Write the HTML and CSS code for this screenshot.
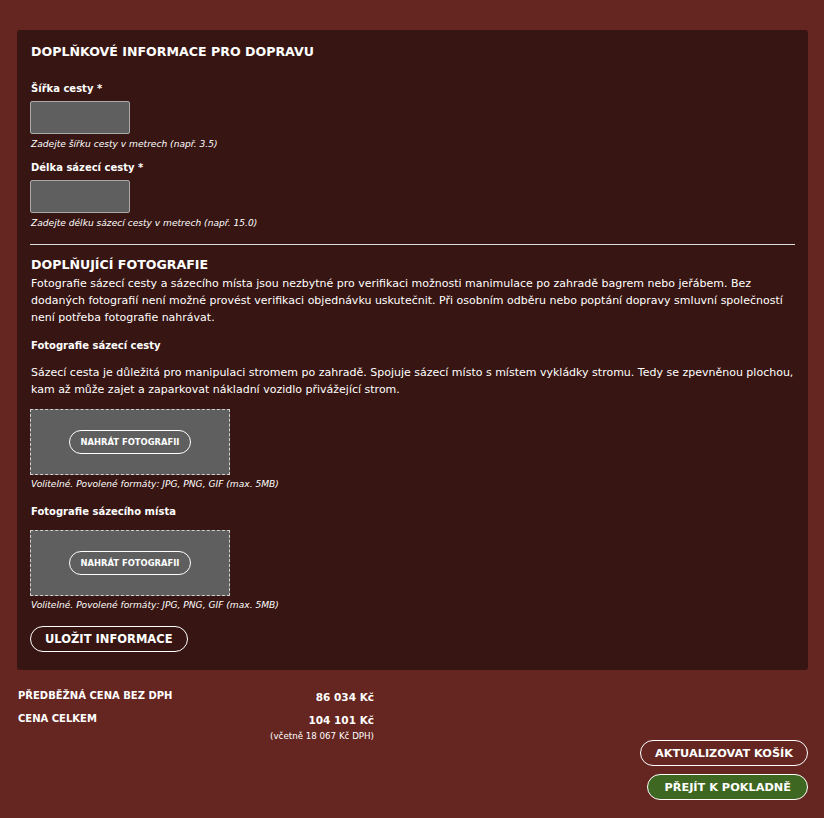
FILE: index.html
```html
<!DOCTYPE html>
<html lang="cs">
<head>
  <meta charset="UTF-8">
  <meta name="viewport" content="width=device-width, initial-scale=1.0">
  <link rel="stylesheet" href="styles.css">
</head>
<body>
  <div class="page">

    <div class="panel">
      <h2 class="panel-title">Doplňkové informace pro dopravu</h2>

      <div class="field">
        <label class="field-label" for="sirka">Šířka cesty *</label>
        <input class="field-input" id="sirka" type="text">
        <div class="hint">Zadejte šířku cesty v metrech (např. 3.5)</div>
      </div>

      <div class="field">
        <label class="field-label" for="delka">Délka sázecí cesty *</label>
        <input class="field-input" id="delka" type="text">
        <div class="hint">Zadejte délku sázecí cesty v metrech (např. 15.0)</div>
      </div>

      <hr class="divider">

      <h2 class="panel-title panel-title--tight">Doplňující fotografie</h2>
      <p class="text">Fotografie sázecí cesty a sázecího místa jsou nezbytné pro verifikaci možnosti manimulace po zahradě bagrem nebo jeřábem. Bez dodaných fotografií není možné provést verifikaci objednávku uskutečnit. Při osobním odběru nebo poptání dopravy smluvní společností není potřeba fotografie nahrávat.</p>

      <div class="photo">
        <div class="photo-title">Fotografie sázecí cesty</div>
        <p class="text">Sázecí cesta je důležitá pro manipulaci stromem po zahradě. Spojuje sázecí místo s místem vykládky stromu. Tedy se zpevněnou plochou, kam až může zajet a zaparkovat nákladní vozidlo přivážející strom.</p>
        <div class="dropzone">
          <button class="btn-small" type="button">Nahrát fotografii</button>
        </div>
        <div class="hint">Volitelné. Povolené formáty: JPG, PNG, GIF (max. 5MB)</div>
      </div>

      <div class="photo">
        <div class="photo-title">Fotografie sázecího místa</div>
        <div class="dropzone">
          <button class="btn-small" type="button">Nahrát fotografii</button>
        </div>
        <div class="hint">Volitelné. Povolené formáty: JPG, PNG, GIF (max. 5MB)</div>
      </div>

      <button class="btn-outline" type="button">Uložit informace</button>
    </div>

    <div class="totals">
      <div class="totals-label">Předběžná cena bez DPH</div>
      <div class="totals-value">86 034 Kč</div>
      <div class="totals-label">Cena celkem</div>
      <div class="totals-value">104 101 Kč<span class="totals-vat">(včetně 18 067 Kč DPH)</span></div>
    </div>

    <div class="actions">
      <button class="btn-outline btn-big" type="button">Aktualizovat košík</button>
      <button class="btn-outline btn-big btn-green" type="button">Přejít k pokladně</button>
    </div>

  </div>
</body>
</html>
```

FILE: styles.css
```css
body {
	margin: 0;
	background-color: #652520;
	color: #fff;
	font-family: "DejaVu Sans", "Liberation Sans", sans-serif;
}

.page {
	padding: 30px 16px 16px 17px;
}

.panel {
	background-color: #371512;
	border-radius: 3px;
	padding: 13px 13px 18px 13px;
}

.panel-title {
	margin: 0 1px 22px;
	font-size: 12.6px;
	line-height: 17px;
	font-weight: bold;
	text-transform: uppercase;
}

.panel-title--tight {
	margin-bottom: 2px;
}

.field {
	margin-bottom: 11px;
}

.field-label {
	display: block;
	font-size: 10px;
	font-weight: bold;
	line-height: 14px;
	margin: 0 0 5px 1px;
}

.field-input {
	display: block;
	box-sizing: border-box;
	width: 100px;
	height: 33px;
	background-color: #5f5f5f;
	border: 1px solid #a9a9a9;
	border-radius: 2px;
	margin: 0;
}

.hint {
	font-size: 9.1px;
	font-style: italic;
	line-height: 12px;
	margin: 4px 0 0 1px;
}

.divider {
	border: none;
	border-top: 1px solid #ddd;
	margin: 15px 0 11px;
}

.text {
	margin: 0 0 13px 1px;
	font-size: 11px;
	line-height: 17px;
}

.photo {
	margin-bottom: 15px;
}

.photo .text {
	margin-bottom: 11px;
}

.photo .hint {
	margin-top: 3px;
}

.photo-title {
	font-size: 10px;
	font-weight: bold;
	line-height: 14px;
	margin: 0 0 11px 1px;
}

.dropzone {
	box-sizing: border-box;
	width: 200px;
	height: 66px;
	background-color: #5f5f5f;
	border: 1px dashed #d0d0d0;
	display: flex;
	align-items: center;
	justify-content: center;
}

.btn-small {
	background: transparent;
	color: #fff;
	border: 1px solid #fff;
	border-radius: 12px;
	height: 24px;
	padding: 0 11px;
	font-family: inherit;
	font-size: 8.4px;
	font-weight: bold;
	text-transform: uppercase;
}

.btn-outline {
	background: transparent;
	color: #fff;
	border: 1px solid #fff;
	border-radius: 13px;
	height: 26px;
	padding: 0 14px;
	font-family: inherit;
	font-size: 11.5px;
	font-weight: bold;
	text-transform: uppercase;
	cursor: pointer;
}

.totals {
	width: 356px;
	margin: 19px 0 0 1px;
	display: grid;
	grid-template-columns: 1fr auto;
	row-gap: 8px;
	font-weight: bold;
	font-size: 10px;
	line-height: 14px;
}

.totals-label {
	text-transform: uppercase;
}

.totals-value {
	text-align: right;
	font-size: 10.5px;
	padding-top: 1px;
}

.totals-vat {
	display: block;
	font-weight: normal;
	font-size: 8.7px;
	line-height: 13px;
	padding-top: 3px;
}

.actions {
	display: flex;
	flex-direction: column;
	align-items: flex-end;
	gap: 8px;
	margin-top: -3px;
}

.btn-big {
	font-size: 11.3px;
	padding: 0 14px;
}

.btn-green {
	background-color: #3e6821;
	padding: 0 16px;
}
```
